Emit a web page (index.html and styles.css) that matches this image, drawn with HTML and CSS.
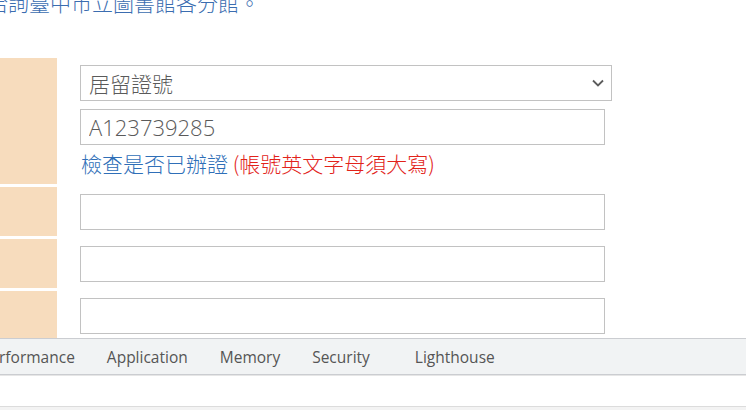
FILE: index.html
```html
<!DOCTYPE html>
<html lang="zh-Hant">
<head>
  <meta charset="UTF-8">
  <title>辦證查詢</title>
  <link rel="stylesheet" href="styles.css">
</head>
<body>

  <!-- 頁面內容 -->
  <div class="pagina">
    <p class="aviso">洽詢臺中市立圖書館各分館。</p>

    <div class="formulario">
      <div class="rotulo"></div>
      <div class="campo">
        <div class="selector">
          <select class="entrada ancho">
            <option>居留證號</option>
          </select>
          <svg class="flecha" width="12" height="8" viewBox="0 0 12 8">
            <path d="M1 1.5 L6 6.5 L11 1.5" fill="none" stroke="#5c5c5c" stroke-width="1.8"/>
          </svg>
        </div>
        <input class="entrada segundo" type="text" value="A123739285">
        <p class="ayuda"><a href="#" class="enlace">檢查是否已辦證</a> <span class="alerta">(帳號英文字母須大寫)</span></p>
      </div>

      <div class="rotulo"></div>
      <div class="campo"><input class="entrada" type="text"></div>

      <div class="rotulo"></div>
      <div class="campo"><input class="entrada" type="text"></div>

      <div class="rotulo"></div>
      <div class="campo"><input class="entrada" type="text"></div>
    </div>
  </div>

  <!-- Panel de herramientas -->
  <div class="herramientas">
    <div class="pestanas">
      <span class="pestana primera">Performance</span>
      <span class="pestana">Application</span>
      <span class="pestana">Memory</span>
      <span class="pestana">Security</span>
      <span class="pestana ultima">Lighthouse</span>
    </div>
    <div class="barra"></div>
    <div class="resto"></div>
  </div>

</body>
</html>
```

FILE: styles.css
```css
body {
  margin: 0;
  padding: 0;
  height: 100vh;
  display: flex;
  flex-direction: column;
  overflow: hidden;
  font-family: "Open Sans", "Noto Sans CJK TC", sans-serif;
  background: #ffffff;
}

.pagina {
  flex: 1;
  overflow: hidden;
}

.aviso {
  margin: -11px 0 0 -13px;
  font-family: "Noto Sans CJK TC", sans-serif;
  font-size: 21px;
  font-weight: 300;
  line-height: 26px;
  color: #3b6db0;
  white-space: nowrap;
}

.formulario {
  display: grid;
  grid-template-columns: 57px 1fr;
  row-gap: 3px;
  margin-top: 43px;
}

.rotulo {
  background-color: #f7dcbd;
}

.campo {
  padding: 7px 0 6px 23px;
}

.selector {
  position: relative;
  width: 532px;
}

.entrada {
  display: block;
  box-sizing: border-box;
  width: 525px;
  height: 36px;
  margin: 0;
  padding: 0 8px;
  border: 1px solid #c2c2c2;
  background: #ffffff;
  font-family: "Open Sans", "Noto Sans CJK TC", sans-serif;
  font-size: 22px;
  font-weight: 300;
  color: #5a5a5a;
  outline: none;
}

select.entrada {
  -webkit-appearance: none;
  appearance: none;
  font-family: "Noto Sans CJK TC", sans-serif;
  font-size: 21px;
}

.ancho {
  width: 532px;
}

.flecha {
  position: absolute;
  right: 8px;
  top: 14px;
  pointer-events: none;
}

.segundo {
  margin-top: 8px;
}

.ayuda {
  margin: 4px 0 0 1px;
  font-family: "Noto Sans CJK TC", sans-serif;
  font-size: 21px;
  font-weight: 300;
  line-height: 29px;
  white-space: nowrap;
}

.enlace {
  color: #2f6fb8;
  text-decoration: none;
}

.alerta {
  color: #e2231a;
}

.herramientas {
  height: 72px;
  flex-shrink: 0;
  display: flex;
  flex-direction: column;
}

.pestanas {
  height: 35px;
  display: flex;
  align-items: center;
  background: #f1f3f4;
  border-top: 1px solid #cbcdd1;
  border-bottom: 1px solid #cbcdd1;
  font-size: 15.5px;
  color: #555555;
  white-space: nowrap;
}

.pestana {
  padding: 0 16px;
}

.primera {
  margin-left: -35px;
}

.ultima {
  margin-left: 13px;
}

.barra {
  height: 30px;
  border-top: 1px solid #e6e6e6;
  border-bottom: 1px solid #dcdcdc;
  background: #ffffff;
}

.resto {
  flex: 1;
  background: #f3f3f3;
}
```
